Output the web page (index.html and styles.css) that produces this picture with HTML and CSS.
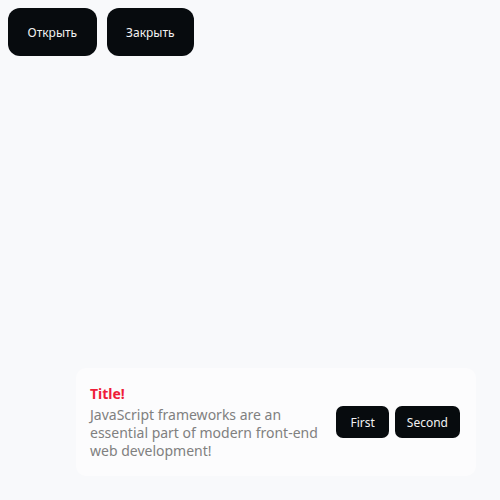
FILE: index.html
```html
<!DOCTYPE html>
<html lang="ru">
<head>
<meta charset="utf-8">
<link rel="stylesheet" href="styles.css">
</head>
<body>
<div class="actions">
  <button class="btn btn-lg">Открыть</button>
  <button class="btn btn-lg">Закрыть</button>
</div>
<div class="toast">
  <div class="toast-text">
    <div class="toast-title">Title!</div>
    <div class="toast-body">JavaScript frameworks are an essential part of modern front-end web development!</div>
  </div>
  <div class="toast-buttons">
    <button class="btn btn-sm btn-first">First</button>
    <button class="btn btn-sm">Second</button>
  </div>
</div>
</body>
</html>
```
FILE: styles.css
```css
html, body {
  margin: 0;
  padding: 0;
  height: 100%;
}
body {
  background: #f8f9fb;
  font-family: "Noto Sans", "DejaVu Sans", sans-serif;
  padding: 8px;
  box-sizing: border-box;
}
.actions {
  display: flex;
  gap: 10px;
}
.btn {
  background: #070b0e;
  color: #f2f2f2;
  border: none;
  font-family: inherit;
  cursor: pointer;
}
.btn-lg {
  height: 48px;
  padding: 0 19.5px;
  border-radius: 12px;
  font-size: 12px;
}
.btn-sm {
  height: 32px;
  padding: 0 12px;
  border-radius: 7px;
  font-size: 12px;
}
.btn-first {
  padding: 0 14px;
}
.toast {
  position: fixed;
  right: 24px;
  bottom: 24px;
  width: 400px;
  box-sizing: border-box;
  height: 108px;
  background: #fcfcfd;
  border-radius: 10px;
  padding: 0 16px 0 14px;
  display: flex;
  align-items: center;
  justify-content: space-between;
}
.toast-text {
  width: 240px;
}
.toast-title {
  color: #ef1c3a;
  font-weight: 700;
  font-size: 14px;
  line-height: 18px;
  margin-bottom: 3px;
}
.toast-body {
  color: #808080;
  font-size: 14px;
  line-height: 18px;
}
.toast-buttons {
  display: flex;
  gap: 6px;
}
```
